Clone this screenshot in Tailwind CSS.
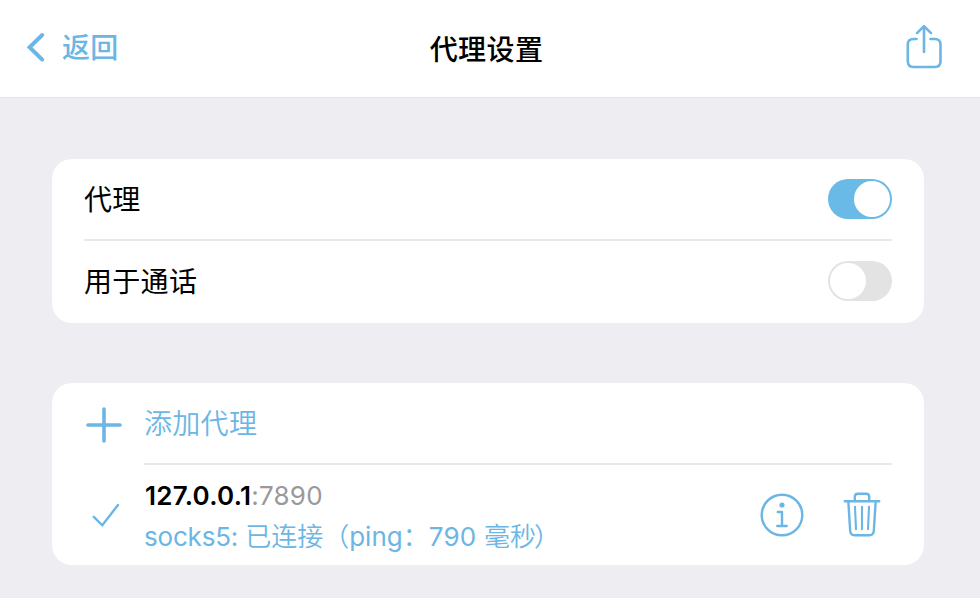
<!DOCTYPE html>
<html lang="zh-CN">
<head>
<meta charset="utf-8">
<title>代理设置</title>
<script src="https://cdn.jsdelivr.net/npm/@tailwindcss/browser@4"></script>
</head>
<body class="flex h-[598px] w-[980px] flex-col overflow-hidden bg-[#eeedf2] font-[Inter,'Noto_Sans_CJK_SC',sans-serif] text-[28px] leading-10 tracking-[0.3px] text-black">
  <header class="grid h-[98px] shrink-0 grid-cols-[1fr_auto_1fr] items-start border-b border-[#e3e3e7] bg-white pr-[36px] pl-[26px]">
    <button class="mt-[27px] flex items-start gap-[16px] text-[#6bb6e4]">
      <svg class="mt-1 h-[32px] w-[20px]" viewBox="0 0 20 32" fill="none" stroke="currentColor" stroke-width="4" stroke-linecap="round" stroke-linejoin="miter"><path d="M16.2 4 3.6 16.2 16.2 28.6"/></svg>
      <span class="pt-px font-medium">返回</span>
    </button>
    <h1 class="mt-[30px] ml-[3px] font-medium tracking-[0.4px]">代理设置</h1>
    <button class="mt-[22px] justify-self-end text-[#6bb6e4]" aria-label="分享">
      <svg class="h-[50px] w-[40px]" viewBox="0 0 40 50" fill="none" stroke="currentColor" stroke-width="2.6" stroke-linecap="round" stroke-linejoin="round"><path d="M12.5 17H9.5Q3.8 17 3.8 22.7V39.3Q3.8 45 9.5 45H30.8Q36.5 45 36.5 39.3V22.7Q36.5 17 30.8 17H26.5M20 30V4.5M13 11.2 20 4.2 27 11.2"/></svg>
    </button>
  </header>
  <main class="flex flex-col gap-[60px] px-[52px] pt-[61px]">
    <section class="h-[164px] w-[872px] rounded-[20px] bg-white px-8">
      <div class="flex h-[82px] items-center justify-between border-b-2 border-[#e8e8e8]">
        <span class="pt-0.5 font-normal">代理</span>
        <span class="flex h-10 w-16 items-center justify-end rounded-full bg-[#6abae8] p-0.5"><span class="size-9 rounded-full bg-white"></span></span>
      </div>
      <div class="flex h-[80px] items-center justify-between">
        <span class="pt-0.5 font-normal">用于通话</span>
        <span class="flex h-10 w-16 items-center rounded-full bg-[#e3e3e3] p-0.5"><span class="size-9 rounded-full bg-white"></span></span>
      </div>
    </section>
    <section class="h-[182px] w-[872px] rounded-[20px] bg-white px-8">
      <div class="flex h-[82px] text-[#6bb6e4]">
        <svg class="mt-[22px] mr-5 size-10" viewBox="0 0 40 40" fill="none" stroke="currentColor" stroke-width="3.6" stroke-linecap="round"><path d="M4 20H36M20 4V36"/></svg>
        <div class="flex flex-1 items-center border-b-2 border-[#e8e8e8] pt-0.5 font-[350]">添加代理</div>
      </div>
      <div class="flex h-[100px]">
        <svg class="mt-[30px] mr-5 size-10 text-[#6bb6e4]" viewBox="0 0 40 40" fill="none" stroke="currentColor" stroke-width="2.4" stroke-linecap="round" stroke-linejoin="miter"><path d="M9.8 21.8 18.3 30.3 34 10"/></svg>
        <div class="mt-[11px] flex-1 text-[26px] tracking-normal">
          <p class="pl-px tracking-[0.25px]"><span class="font-semibold">127.0.0.1</span><span class="text-[#999999]">:7890</span></p>
          <p class="pt-px text-[#6bb6e4]"><span class="tracking-[-0.2px]">socks5: </span><span class="font-[350]">已连接（</span>ping<span class="font-[350]">：</span><span class="tracking-[0.25px]">790 </span><span class="font-[350]">毫秒</span><span class="-ml-[2px] font-[350]">）</span></p>
        </div>
        <div class="mt-[25px] mr-[10px] flex gap-[38px] text-[#6bb6e4]">
          <svg class="h-[50px] w-11" viewBox="0 0 44 50" fill="none" stroke="currentColor" stroke-width="2.4" stroke-linecap="round" stroke-linejoin="round"><circle cx="22" cy="25" r="20.3"/><circle cx="22" cy="15" r="2.6" fill="currentColor" stroke="none"/><path d="M17.8 22H22V36M17.3 36H26.7"/></svg>
          <svg class="h-[50px] w-10" viewBox="0 0 40 50" fill="none" stroke="currentColor" stroke-width="2.4" stroke-linecap="round" stroke-linejoin="round"><path d="M2.8 11.2H37.2M12.8 11V7Q12.8 3.8 16 3.8H24Q27.2 3.8 27.2 7V11M6.3 11 8.2 41Q8.5 45.2 12.7 45.2H27.3Q31.5 45.2 31.8 41L33.7 11"/><path stroke-width="2.1" d="M13 16.8 14 39.2M20 16.8V39.2M27 16.8 26 39.2"/></svg>
        </div>
      </div>
    </section>
  </main>
</body>
</html>
